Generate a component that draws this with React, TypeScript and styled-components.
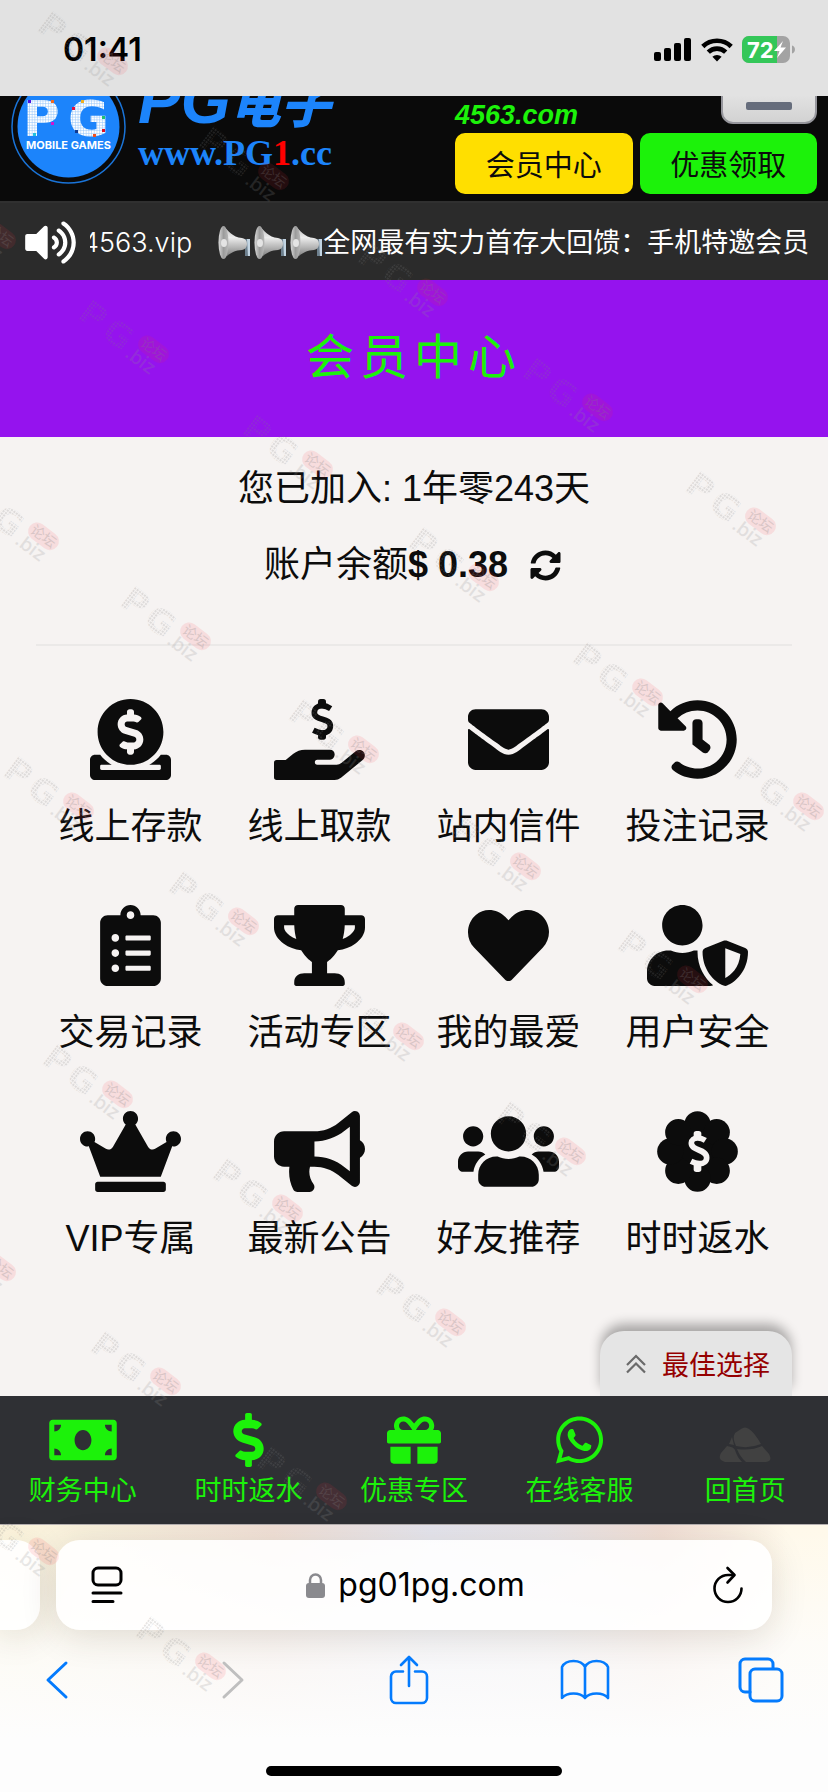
import React from 'react';
import styled, { createGlobalStyle, css } from 'styled-components';
import {
  FaBullhorn, FaClipboardList, FaCrown, FaDollarSign, FaDonate, FaEnvelope, FaGift,
  FaHeart, FaHistory, FaMoneyBill, FaSyncAlt, FaTrophy, FaUserShield,
  FaUsers, FaVolumeUp, FaWhatsapp,
} from 'react-icons/fa';

const cjk = `'Noto Sans CJK SC', sans-serif`;
const green = '#1cf20a';

const GlobalStyle = createGlobalStyle`
  * { box-sizing: border-box; }
  body { margin: 0; background: #f6f3f2; font-family: 'Liberation Sans', ${cjk}; color: #0c0c0c; }
  button { margin: 0; padding: 0; border: 0; background: none; font: inherit; color: inherit; cursor: pointer; }
  a { color: inherit; text-decoration: none; }
  h1, p { margin: 0; font-weight: inherit; }
  svg { display: block; flex: none; }
`;

const Page = styled.div`
  position: relative;
  display: flex;
  flex-direction: column;
  min-height: 100vh;
  overflow: hidden;
`;

/* ---------- phone status bar ---------- */
const StatusBar = styled.div`
  display: flex;
  align-items: center;
  justify-content: space-between;
  height: 96px;
  padding: 4px 33px 0 63px;
  background: #e2e2e2;
  color: #000;
`;
const Clock = styled.time`
  font: 600 32px/40px Inter, sans-serif;
`;
const StatusIcons = styled.div`
  display: flex;
  align-items: center;
  gap: 9px;
`;

/* ---------- site header ---------- */
const Header = styled.header`
  display: flex;
  align-items: flex-end;
  justify-content: space-between;
  height: 105px;
  padding: 0 11px 7px;
  overflow: hidden;
  background: #0a0a0a;
`;
const Brand = styled.a`
  display: flex;
  align-items: flex-end;
  gap: 12px;
  padding-bottom: 10px;
`;
const BrandText = styled.span`
  display: flex;
  flex-direction: column;
  padding-bottom: 11px;
  color: #1c84fb;
`;
const BrandName = styled.span`
  display: flex;
  align-items: flex-end;
  font: italic 700 64px/64px 'Liberation Sans', ${cjk};
  white-space: nowrap;
`;
const BrandCjk = styled.span`
  font: italic 900 50px/64px ${cjk};
`;
const BrandUrl = styled.span`
  font: 700 36px/40px 'Liberation Serif', serif;
`;
const UrlAccent = styled.span`
  color: #f00;
`;
const HeaderSide = styled.div`
  display: flex;
  flex-direction: column;
  gap: 8px;
  width: 362px;
`;
const HeaderTop = styled.div`
  display: flex;
  align-items: flex-end;
  justify-content: space-between;
`;
const Domain = styled.a`
  color: ${green};
  font: italic 700 27px/20px 'Liberation Sans', sans-serif;
`;
const MenuButton = styled.button`
  display: flex;
  align-items: flex-end;
  justify-content: center;
  width: 96px;
  height: 80px;
  margin-bottom: 1px;
  padding-bottom: 12px;
  border: 2px solid #96969c;
  border-radius: 12px;
  background: linear-gradient(#fff, #d2d2d2);
`;
const MenuLine = styled.span`
  width: 46px;
  height: 8px;
  border-radius: 2px;
  background: #666d7c;
`;
const HeaderActions = styled.div`
  display: grid;
  grid-template-columns: 1fr 1fr;
  gap: 7px;
`;
const HeaderButton = styled.button<{ $bg: string }>`
  height: 61px;
  padding-bottom: 2px;
  border-radius: 10px;
  background: ${(p) => p.$bg};
  font: 400 29px/40px ${cjk};
  color: #0c0c0c;
`;

/* ---------- announcements ---------- */
const Marquee = styled.div`
  display: flex;
  align-items: center;
  gap: 14px;
  height: 79px;
  padding: 2px 19px 0 25px;
  border-top: 2px solid #303030;
  background: #2b2b2b;
  color: #fff;
  font: 400 27px/40px Inter, ${cjk};
`;
const SoundIcon = styled(FaVolumeUp)`
  width: 51px;
  height: 45px;
`;
const MarqueeWindow = styled.div`
  display: flex;
  flex: 1;
  min-width: 0;
  overflow: hidden;
`;
const MarqueeTrack = styled.p`
  display: flex;
  align-items: center;
  margin-left: -8px;
  white-space: nowrap;
`;
const MarqueeLink = styled.span`
  font-weight: 300;
`;
const Speakers = styled.span`
  display: flex;
  margin: 0 -2px 0 25px;
`;

/* ---------- account ---------- */
const Title = styled.h1`
  display: flex;
  align-items: center;
  justify-content: center;
  height: 157px;
  padding-bottom: 12px;
  background: #9513ee;
  color: ${green};
  font: 400 48px/60px ${cjk};
  letter-spacing: 6px;
`;
const Main = styled.main`
  display: flex;
  flex: 1;
  flex-direction: column;
  padding: 0 36px;
  background: #f6f3f2;
`;
const Summary = styled.section`
  display: flex;
  flex-direction: column;
  align-items: center;
  gap: 28px;
  padding: 28px 0 55px;
  border-bottom: 2px solid #ebe9e8;
  font-size: 36px;
  line-height: 48px;
`;
const Balance = styled.p`
  display: flex;
  align-items: center;
  padding-right: 3px;
`;
const Amount = styled.strong`
  font-weight: 700;
  margin-right: 22px;
`;
const Grid = styled.nav`
  display: grid;
  grid-template-columns: repeat(4, 1fr);
  row-gap: 54px;
  padding-top: 53px;
`;
const Tile = styled.a`
  display: flex;
  flex-direction: column;
  align-items: center;
  gap: 23px;
  font-size: 36px;
  line-height: 48px;
  white-space: nowrap;
`;
const IconFrame = styled.span<{ $width: number; $height: number }>`
  display: flex;

  svg {
    width: ${(p) => p.$width}px;
    height: ${(p) => p.$height}px;
  }
`;
const BestPick = styled.button`
  display: flex;
  align-items: center;
  justify-content: center;
  gap: 16px;
  align-self: flex-end;
  width: 192px;
  height: 65px;
  margin-top: auto;
  padding-left: 4px;
  border-radius: 24px 24px 0 0;
  background: #e5e5e5;
  box-shadow: 0 -8px 12px -1px rgba(0, 0, 0, 0.32);
  color: #950000;
  font: 400 27px/32px ${cjk};
`;

/* ---------- site tab bar ---------- */
const TabBar = styled.nav`
  position: relative;
  display: grid;
  grid-template-columns: repeat(5, 1fr);
  height: 129px;
  padding-top: 17px;
  border-bottom: 1px solid #b5b0b0;
  background: #2f3034;
`;
const Tab = styled.a`
  display: flex;
  flex-direction: column;
  align-items: center;
  gap: 6px;
  color: ${green};
  font: 400 27px/32px ${cjk};
`;

/* ---------- browser chrome ---------- */
const Browser = styled.div`
  position: relative;
  display: flex;
  flex-direction: column;
  align-items: center;
  height: 267px;
  padding-bottom: 16px;
  background:
    linear-gradient(rgba(255, 255, 255, 0) 0, rgba(253, 253, 253, 0.75) 45%, #fdfdfd 80%),
    linear-gradient(90deg, #fdf5dc 0%, #f8f0dc 12%, #f1e0d6 33%, #e5e5ee 52%, #e8e4e8 66%, #f2dfd5 80%, #fff9ea 95%);
`;
const AddressRow = styled.div`
  display: flex;
  gap: 16px;
  width: 100%;
  padding: 15px 56px 0 0;
`;
const card = css`
  height: 90px;
  background: rgba(255, 255, 255, 0.88);
  box-shadow: 0 6px 36px rgba(60, 40, 20, 0.14);
`;
const PreviousTab = styled.span`
  ${card}
  width: 40px;
  border-radius: 0 24px 24px 0;
`;
const AddressBar = styled.div`
  ${card}
  display: flex;
  flex: 1;
  align-items: center;
  justify-content: space-between;
  padding: 0 28px 0 35px;
  border-radius: 24px;
  color: #000;
`;
const Address = styled.span`
  display: flex;
  align-items: center;
  gap: 13px;
  margin-right: 4px;
  font: 400 32px/40px Inter, sans-serif;
`;
const Toolbar = styled.div`
  display: flex;
  align-items: center;
  justify-content: space-between;
  width: 100%;
  height: 100px;
  padding: 0 42px 0 32px;
  color: #047bfd;
`;
const ToolbarButton = styled.button`
  display: flex;
  justify-content: center;
  width: 50px;
`;
const HomeIndicator = styled.span`
  width: 296px;
  height: 10px;
  margin-top: auto;
  border-radius: 5px;
  background: #000;
`;

const WatermarkLayer = styled.svg`
  position: absolute;
  top: 0;
  left: 0;
  width: 100%;
  height: 100%;
  pointer-events: none;
`;

/* ---------- drawings ---------- */
const Signal = () => (
  <svg width="38" height="24" viewBox="0 0 38 24">
    <rect x="0" y="14" width="7" height="9" rx="2" />
    <rect x="10" y="10" width="7" height="13" rx="2" />
    <rect x="20" y="5" width="7" height="18" rx="2" />
    <rect x="30" y="0" width="7" height="23" rx="2" />
  </svg>
);
const Wifi = () => (
  <svg width="32" height="24" viewBox="0 0 32 24" fill="none" stroke="#000" strokeWidth="4.6">
    <path d="M1.8 8.5a20.4 20.4 0 0 1 28.4 0" />
    <path d="M7.3 14.2a12.4 12.4 0 0 1 17.4 0" />
    <path d="M16 23.5l-4.6-4.7a6.5 6.5 0 0 1 9.2 0z" fill="#000" stroke="none" />
  </svg>
);
const Battery = () => (
  <svg width="53" height="28" viewBox="0 0 53 28">
    <defs><clipPath id="cell"><rect width="48" height="27" rx="7" /></clipPath></defs>
    <g clipPath="url(#cell)">
      <rect width="48" height="27" fill="#a3a3a3" />
      <rect width="35" height="27" fill="#34c759" />
    </g>
    <path d="M50 9.5a4.2 4.2 0 0 1 0 8z" fill="#a3a3a3" />
    <text x="5" y="22" fill="#fff" fontFamily="Inter, sans-serif" fontWeight="700" fontSize="22">72</text>
    <path d="M41 5l-9 10h5.5L35 22l9-10.500h-5.500z" fill="#fff" />
  </svg>
);

const Logo = () => (
  <svg width="115" height="115" viewBox="0 0 115 115">
    <defs>
      <pattern id="pixels" width="2.700" height="2.700" patternUnits="userSpaceOnUse">
        <rect width="2.700" height="2.700" fill="#8fc3fb" />
        <rect width="2.200" height="2.200" fill="#fff" />
      </pattern>
    </defs>
    <circle cx="57.500" cy="57.500" r="56.500" fill="none" stroke="#1a74d8" strokeWidth="1.500" />
    <circle cx="57.500" cy="57.500" r="51" fill="#1c84fb" />
    <text y="67" fill="url(#pixels)" fontFamily="DejaVu Sans, sans-serif" fontWeight="700" fontSize="50">
      <tspan x="12">P</tspan><tspan x="57">G</tspan>
    </text>
    <text x="57.500" y="80" textAnchor="middle" fill="#fff" fontFamily="Inter, sans-serif" fontWeight="700" fontSize="11">MOBILE GAMES</text>
    <rect x="17" y="31" width="3" height="3" fill="#4a12e0" />
    <rect x="40" y="31" width="3" height="3" fill="#f06a20" />
    <rect x="40" y="53" width="3" height="3" fill="#d412d0" />
    <rect x="22" y="64" width="3" height="3" fill="#20c0e0" />
    <rect x="61" y="38" width="3" height="3" fill="#e01040" />
    <rect x="70" y="31" width="3" height="3" fill="#f0b020" />
    <rect x="91" y="47" width="3" height="3" fill="#20c070" />
    <rect x="91" y="60" width="3" height="3" fill="#e01020" />
    <rect x="64" y="61" width="3" height="3" fill="#103a90" />
    <rect x="82" y="65" width="3" height="3" fill="#f05020" />
  </svg>
);

const Megaphone = () => (
  <svg width="36" height="36" viewBox="0 0 36 36">
    <defs>
      <linearGradient id="horn" x1="0" y1="0" x2="0" y2="1">
        <stop offset="0" stopColor="#b4b4b4" /><stop offset="0.350" stopColor="#ededed" /><stop offset="0.650" stopColor="#b5b5b5" /><stop offset="1" stopColor="#6f6f6f" />
      </linearGradient>
      <linearGradient id="bell" x1="0" y1="0" x2="1" y2="0">
        <stop offset="0" stopColor="#d9d9d9" /><stop offset="0.500" stopColor="#9c9c9c" /><stop offset="1" stopColor="#b9b9b9" />
      </linearGradient>
    </defs>
    <path d="M25 14h7v17h-4V19h-3z" fill="#6d7f8d" />
    <path d="M30 14h3v17h-2z" fill="#c2d4e2" />
    <path d="M6 1c6 5 9 11 19 12q5 1 5 6t-5 6c-8 0-14 5-19 9z" fill="url(#horn)" />
    <ellipse cx="6.500" cy="17.500" rx="5" ry="16.500" fill="url(#bell)" />
    <ellipse cx="7" cy="18" rx="3" ry="4" fill="#e4e4e4" />
  </svg>
);

const HandDollar = () => (
  <svg viewBox="0 0 273 243" fill="currentColor">
    <path
      d="M170 27c-9-6-17-9-26-9-13 0-23 8-23 21 0 26 48 14 48 40 0 14-11 21-24 21-9 0-17-3-27-8"
      fill="none" stroke="currentColor" strokeWidth="17" transform="translate(0 2)"
    />
    <rect x="132" y="0" width="24" height="28" rx="8" />
    <rect x="132" y="93" width="24" height="29" rx="8" />
    <path d="M0 191q0-8 8-8h27l22-18q16-13 36-13h75c8 0 14 6 14 14 0 9-6 16-14 16h-38c-10 0-10 15 0 15h58q8 0 14-5l43-35c6-5 16-5 22 0 8 7 7 20-1 26l-65 53q-9 7-19 7H8q-8 0-8-8z" />
  </svg>
);

const BadgeDollar = () => (
  <svg viewBox="0 0 243 243">
    <g fill="currentColor">
      <circle cx="121.500" cy="121.500" r="82" />
      {[0, 45, 90, 135, 180, 225, 270, 315].map((a) => (
        <circle key={a} cx="121.500" cy="40" r="39.500" transform={`rotate(${a} 121.500 121.500)`} />
      ))}
    </g>
    <path
      d="M145 88c-8-5-15-7-23-7-11 0-19 6-19 15 0 25 46 17 46 44 0 11-9 18-22 18-9 0-17-3-25-7"
      fill="none" stroke="#f6f3f2" strokeWidth="17"
    />
    <rect x="110" y="60" width="23" height="26" rx="8" fill="#f6f3f2" />
    <rect x="110" y="156" width="23" height="27" rx="8" fill="#f6f3f2" />
  </svg>
);

const HomeRocks = () => (
  <svg viewBox="0 0 54 54" fill="#414141">
    <path d="M18 33q-4-8-1-13l6-4q4-3 8 0 5 3 12 15-12 5-25 2z" />
    <path d="M14 24l2 8-5-1z" />
    <path d="M9 33q7 1 8 4 2 7 7 12H7q-8-2-4-9z" />
    <path d="M19 36q14 2 25-3l7 8q4 7-3 8H28q-6-5-9-13z" />
  </svg>
);

const ChevronsUp = () => (
  <svg width="20" height="20" viewBox="0 0 20 20" fill="none" stroke="#6a6a6a" strokeWidth="2.200">
    <path d="M1 11l9-9 9 9M1 18.500l9-9 9 9" />
  </svg>
);

const stroke = { fill: 'none', stroke: 'currentColor', strokeWidth: 3, strokeLinecap: 'round', strokeLinejoin: 'round' } as const;

const PageMenu = () => (
  <svg width="32" height="38" viewBox="0 0 32 38" {...stroke}>
    <rect x="2" y="2" width="28" height="17" rx="5" />
    <path d="M2 27h28M2 35.500h20" />
  </svg>
);
const Lock = () => (
  <svg width="19" height="27" viewBox="0 0 19 27">
    <path d="M4 12V8a5.500 5.500 0 0 1 11 0v4" fill="none" stroke="#8a8a8e" strokeWidth="2.500" />
    <rect y="11" width="19" height="15" rx="3" fill="#8a8a8e" />
  </svg>
);
const Reload = () => (
  <svg width="32" height="38" viewBox="0 0 32 38" {...stroke} strokeWidth={2.6}>
    <path d="M22 9H16a13.500 13.500 0 1 0 13.500 13.500" />
    <path d="M15.500 2l7 7-7 7.500" />
  </svg>
);
const Back = () => (
  <svg width="26" height="40" viewBox="0 0 26 40" {...stroke}><path d="M22 3L4 20l18 17" /></svg>
);
const Forward = () => (
  <svg width="26" height="40" viewBox="0 0 26 40" {...stroke} stroke="#bfbfbf"><path d="M4 3l18 17L4 37" /></svg>
);
const Share = () => (
  <svg width="40" height="52" viewBox="0 0 40 52" {...stroke} strokeWidth={2.6}>
    <path d="M14 17.500H7a5 5 0 0 0-5 5V44a5 5 0 0 0 5 5h26a5 5 0 0 0 5-5V22.500a5 5 0 0 0-5-5h-7M20 32V3M12 11l8-8 8 8" />
  </svg>
);
const Book = () => (
  <svg width="50" height="42" viewBox="0 0 50 42" {...stroke} strokeWidth={2.600}>
    <path d="M25 8C21 0 6 0 2 8v31c5-6 18-6 23 0 5-6 18-6 23 0V8C44 0 29 0 25 8zM25 8v31" />
  </svg>
);
const Pages = () => (
  <svg width="46" height="46" viewBox="0 0 46 46" {...stroke}>
    <path d="M12 35H7a5 5 0 0 1-5-5V7a5 5 0 0 1 5-5h23a5 5 0 0 1 5 5v4" />
    <rect x="12" y="12" width="32" height="32" rx="5" />
  </svg>
);

const markPositions: Array<[number, number]> = [
  [52, 12], [213, 127], [-60, 186], [372, 243], [93, 300], [537, 358], [257, 415], [700, 472],
  [-17, 487], [423, 528], [135, 587], [587, 643], [303, 700], [748, 757], [18, 757], [465, 817],
  [183, 872], [632, 930], [348, 987], [57, 1045], [510, 1102], [227, 1159], [-60, 1218],
  [390, 1273], [105, 1332], [271, 1447], [-17, 1502], [150, 1617],
];

const Watermarks = () => (
  <WatermarkLayer aria-hidden="true">
    <defs>
      <pattern id="dots" width="3" height="3" patternUnits="userSpaceOnUse">
        <rect width="2" height="2" fill="#808080" />
      </pattern>
      <g id="mark">
        <g transform="rotate(37)" fontFamily="Inter, sans-serif">
          <text y="24" fontFamily="DejaVu Sans, sans-serif" fontWeight="700" fontSize="34" fill="url(#dots)" opacity="0.200">
            <tspan x="-3">P</tspan><tspan x="27">G</tspan>
          </text>
          <rect x="61" y="-6" width="34" height="18" rx="9" fill="#ff2a3c" opacity="0.110" />
          <text x="64" y="8" fontFamily="Noto Sans CJK SC, sans-serif" fontSize="14" fill="#808080" opacity="0.250">论坛</text>
          <text x="58" y="26" fontSize="19" fontWeight="500" fill="#909090" opacity="0.200">.biz</text>
        </g>
      </g>
    </defs>
    {markPositions.map(([x, y]) => <use key={`${x}-${y}`} href="#mark" x={x} y={y} />)}
  </WatermarkLayer>
);

const tiles = [
  { label: '线上存款', icon: <FaDonate />, width: 81 },
  { label: '线上取款', icon: <HandDollar />, width: 91 },
  { label: '站内信件', icon: <FaEnvelope />, width: 81 },
  { label: '投注记录', icon: <FaHistory />, width: 81 },
  { label: '交易记录', icon: <FaClipboardList />, width: 61 },
  { label: '活动专区', icon: <FaTrophy />, width: 91 },
  { label: '我的最爱', icon: <FaHeart />, width: 81 },
  { label: '用户安全', icon: <FaUserShield />, width: 101 },
  { label: 'VIP专属', icon: <FaCrown />, width: 101 },
  { label: '最新公告', icon: <FaBullhorn />, width: 91 },
  { label: '好友推荐', icon: <FaUsers />, width: 101 },
  { label: '时时返水', icon: <BadgeDollar />, width: 81 },
];

const tabs = [
  { label: '财务中心', icon: <FaMoneyBill />, width: 68 },
  { label: '时时返水', icon: <FaDollarSign />, width: 31 },
  { label: '优惠专区', icon: <FaGift />, width: 54 },
  { label: '在线客服', icon: <FaWhatsapp />, width: 47 },
  { label: '回首页', icon: <HomeRocks />, width: 54 },
];

export default function App() {
  return (
    <Page>
      <GlobalStyle />
      <StatusBar>
        <Clock>01:41</Clock>
        <StatusIcons><Signal /><Wifi /><Battery /></StatusIcons>
      </StatusBar>

      <Header>
        <Brand href="#">
          <Logo />
          <BrandText>
            <BrandName>PG<BrandCjk>电子</BrandCjk></BrandName>
            <BrandUrl>www.PG<UrlAccent>1</UrlAccent>.cc</BrandUrl>
          </BrandText>
        </Brand>
        <HeaderSide>
          <HeaderTop>
            <Domain href="#">4563.com</Domain>
            <MenuButton aria-label="菜单"><MenuLine /></MenuButton>
          </HeaderTop>
          <HeaderActions>
            <HeaderButton $bg="#ffdf00">会员中心</HeaderButton>
            <HeaderButton $bg={green}>优惠领取</HeaderButton>
          </HeaderActions>
        </HeaderSide>
      </Header>

      <Marquee>
        <SoundIcon />
        <MarqueeWindow>
          <MarqueeTrack>
            <MarqueeLink>4563.vip</MarqueeLink>
            <Speakers><Megaphone /><Megaphone /><Megaphone /></Speakers>
            全网最有实力首存大回馈：手机特邀会员
          </MarqueeTrack>
        </MarqueeWindow>
      </Marquee>

      <Title>会员中心</Title>

      <Main>
        <Summary>
          <p>您已加入: 1年零243天</p>
          <Balance>
            账户余额<Amount>$ 0.38</Amount>
            <button aria-label="刷新余额"><FaSyncAlt size={31} /></button>
          </Balance>
        </Summary>
        <Grid>
          {tiles.map((t) => (
            <Tile href="#" key={t.label}>
              <IconFrame $width={t.width} $height={81}>{t.icon}</IconFrame>
              {t.label}
            </Tile>
          ))}
        </Grid>
        <BestPick><ChevronsUp />最佳选择</BestPick>
      </Main>

      <TabBar>
        {tabs.map((t) => (
          <Tab href="#" key={t.label}>
            <IconFrame $width={t.width} $height={54}>{t.icon}</IconFrame>
            {t.label}
          </Tab>
        ))}
      </TabBar>

      <Browser>
        <AddressRow>
          <PreviousTab />
          <AddressBar>
            <button aria-label="页面菜单"><PageMenu /></button>
            <Address><Lock />pg01pg.com</Address>
            <button aria-label="重新加载"><Reload /></button>
          </AddressBar>
        </AddressRow>
        <Toolbar>
          <ToolbarButton aria-label="后退"><Back /></ToolbarButton>
          <ToolbarButton aria-label="前进"><Forward /></ToolbarButton>
          <ToolbarButton aria-label="分享"><Share /></ToolbarButton>
          <ToolbarButton aria-label="书签"><Book /></ToolbarButton>
          <ToolbarButton aria-label="标签页"><Pages /></ToolbarButton>
        </Toolbar>
        <HomeIndicator />
      </Browser>

      <Watermarks />
    </Page>
  );
}
